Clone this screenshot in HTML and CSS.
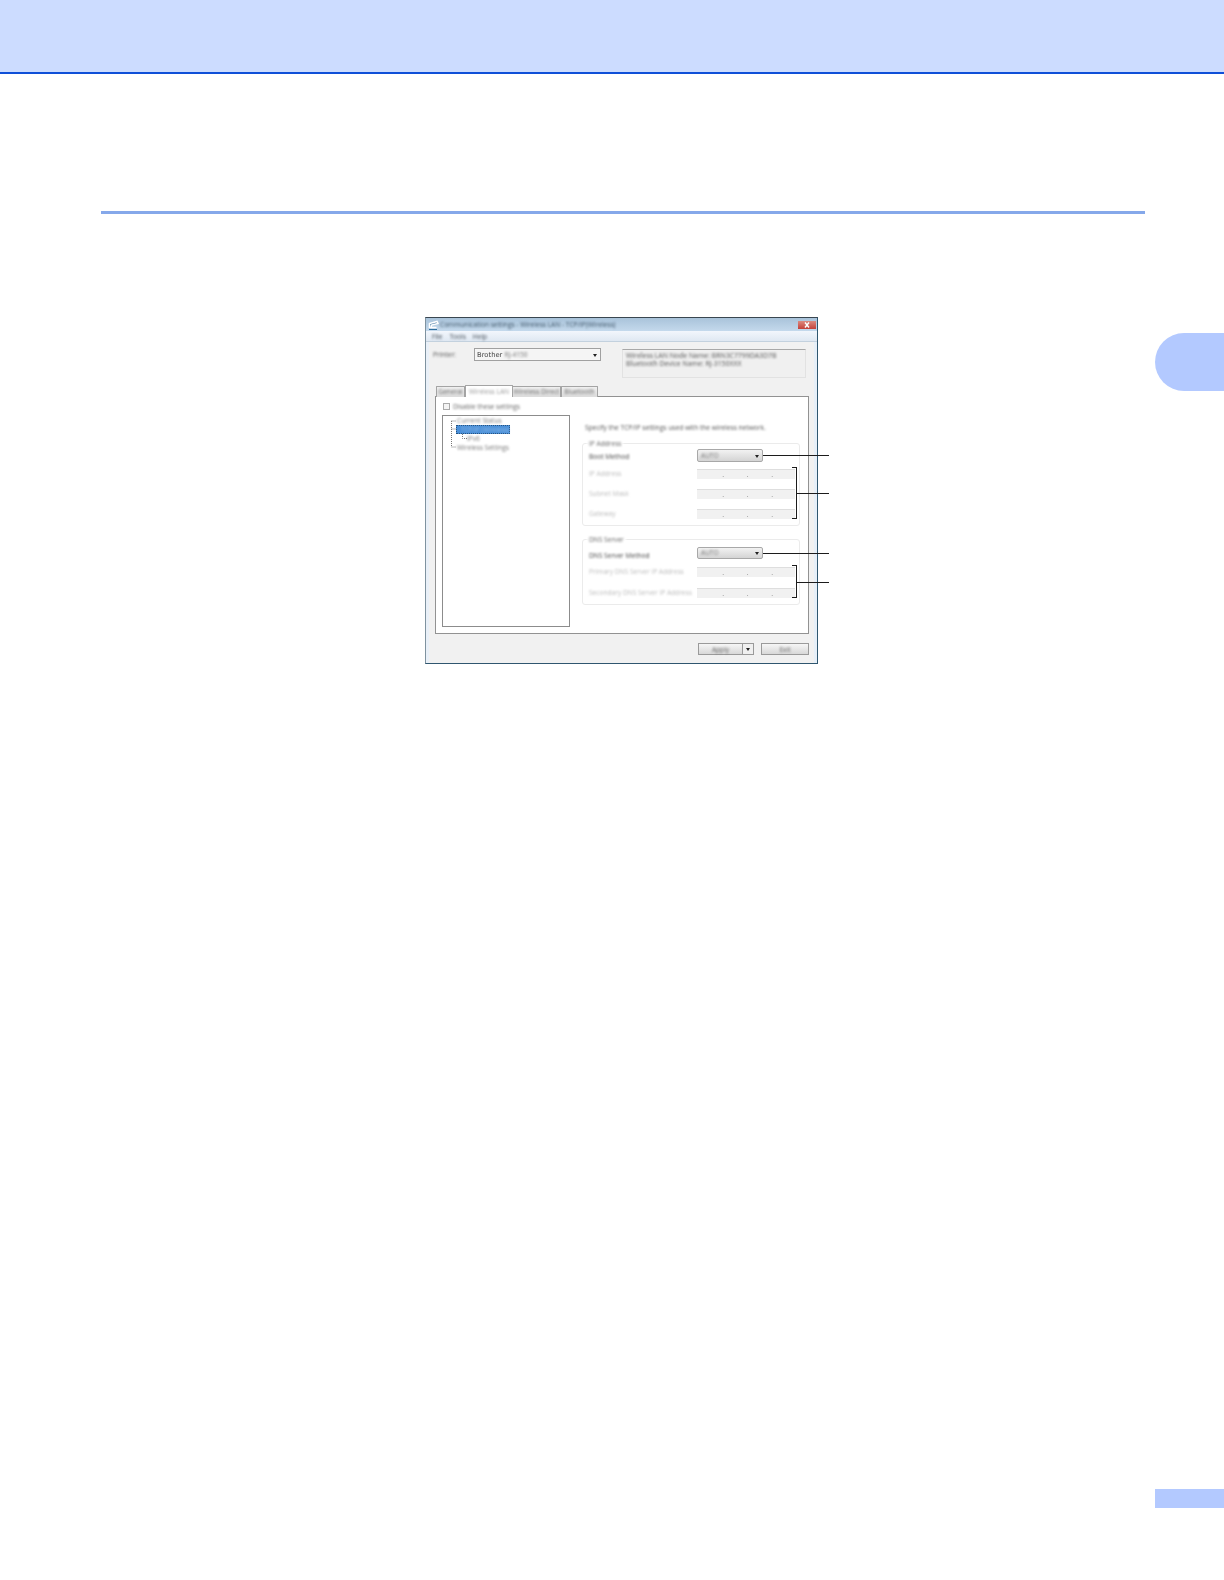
FILE: index.html
```html
<!DOCTYPE html>
<html lang="en">
<head>
<meta charset="utf-8">
<title>Communication settings</title>
<link rel="stylesheet" href="styles.css">
</head>
<body>
<header class="band"></header>
<div class="rule"></div>
<main class="stage">
  <section class="dialog">
    <div class="titlebar">
      <svg class="appicon" viewBox="0 0 11 10" width="11" height="10"><path d="M1.5 8 L1.5 3.5 L9 1.5 L10 3.5 L3.5 5 L3 7.5 L8.5 7.5" fill="#4d7fa6" stroke="#ffffff" stroke-width="1.5"/><path d="M1 9.5 H9" stroke="#2f6f9f" stroke-width="1"/></svg>
      <span class="t title">Communication settings - Wireless LAN - TCP/IP(Wireless)</span>
      <span class="close"><svg viewBox="0 0 18 8" width="18" height="8"><path d="M7 1.5 L11 6.5 M11 1.5 L7 6.5" stroke="#fff" stroke-width="1.4"/></svg></span>
    </div>
    <nav class="menu"><span class="t">File</span><span class="t">Tools</span><span class="t">Help</span></nav>
    <div class="toprow">
      <span class="t devlabel">Printer:</span>
      <div class="combo"><span class="brand">Brother</span><span class="t model">RJ-4150</span><span class="caret"></span></div>
      <div class="info">
        <span class="t">Wireless LAN Node Name: BRN3C7799DA3D7B</span>
        <span class="t">Bluetooth Device Name: RJ-3150XXX</span>
      </div>
    </div>
    <div class="tabs">
      <span class="tab tab-general"><span class="t">General</span></span>
      <span class="tab tab-lan active"><span class="t">Wireless LAN</span></span>
      <span class="tab tab-direct"><span class="t">Wireless Direct</span></span>
      <span class="tab tab-bt"><span class="t">Bluetooth</span></span>
    </div>
    <div class="panel">
      <label class="check"><span class="box"></span><span class="t">Disable these settings</span></label>
      <div class="columns">
        <div class="tree">
          <svg class="treelines" width="30" height="40" viewBox="0 0 30 40"><path d="M8.5 5 V31 M8.5 5 H13 M8.5 13 H13 M8.5 31 H13 M19.5 18 V22.5 H24" fill="none" stroke="#777" stroke-dasharray="1 1"/></svg>
          <div class="node"><span class="t">Current Status</span></div>
          <div class="node selected"><span class="t">TCP/IP (Wireless)</span></div>
          <div class="node sub"><span class="t">IPv6</span></div>
          <div class="node"><span class="t">Wireless Settings</span></div>
        </div>
        <div class="settings">
          <p class="t intro">Specify the TCP/IP settings used with the wireless network.</p>
          <fieldset class="group group-ip">
            <span class="t legend">IP Address</span>
            <span class="t strong">Boot Method</span>
            <div class="select"><span class="t">AUTO</span><span class="caret"></span></div>
            <span class="t muted">IP Address</span>
            <div class="field"><i>.</i><i>.</i><i>.</i><i></i></div>
            <span class="t muted">Subnet Mask</span>
            <div class="field"><i>.</i><i>.</i><i>.</i><i></i></div>
            <span class="t muted">Gateway</span>
            <div class="field"><i>.</i><i>.</i><i>.</i><i></i></div>
            <span class="lead lead-select"></span>
            <span class="bracket"></span>
            <span class="lead lead-bracket"></span>
          </fieldset>
          <fieldset class="group group-dns">
            <span class="t legend">DNS Server</span>
            <span class="t strong">DNS Server Method</span>
            <div class="select"><span class="t">AUTO</span><span class="caret"></span></div>
            <span class="t muted">Primary DNS Server IP Address</span>
            <div class="field"><i>.</i><i>.</i><i>.</i><i></i></div>
            <span class="t muted">Secondary DNS Server IP Address</span>
            <div class="field"><i>.</i><i>.</i><i>.</i><i></i></div>
            <span class="lead lead-select"></span>
            <span class="bracket"></span>
            <span class="lead lead-bracket"></span>
          </fieldset>
        </div>
      </div>
    </div>
    <div class="actions">
      <div class="split"><span class="btn-main"><span class="t">Apply</span></span><span class="btn-drop"><span class="caret"></span></span></div>
      <div class="exit"><span class="t">Exit</span></div>
    </div>
  </section>
  <aside class="sidetab"></aside>
</main>
<footer class="foot"><div class="pagetab"></div></footer>
</body>
</html>
```

FILE: styles.css
```css
* { box-sizing: border-box; }
html, body { margin: 0; padding: 0; background: #fff; }
body { height: 1580px; overflow: hidden; font-family: "Open Sans", "Liberation Sans", sans-serif; font-size: 6.6px; color: #444; }

.band { height: 74px; background: #ccdcff; border-bottom: 2px solid #0f4fd8; }
.rule { height: 3px; margin: 137px 79px 0 101px; background: #85a8ea; }
.stage { display: flex; align-items: flex-start; margin-top: 103px; padding-left: 425px; }
.sidetab { width: 69px; height: 58px; margin: 16px 0 0 auto; background: #b3c9ff; border-radius: 29px 0 0 29px; }
.foot { display: flex; justify-content: flex-end; margin-top: 825px; }
.pagetab { width: 69px; height: 19px; background: #b3c9ff; }

.t { display: inline-block; filter: blur(0.8px); white-space: nowrap; }

.dialog { width: 393px; height: 347px; border: 1px solid #7f929f; border-top-color: #3a4650; border-right-color: #2f566f; border-bottom-color: #2f566f; background: #f1f1f1; box-shadow: inset -3px 0 0 #e6eff8, inset 3px 0 0 #e9f0f8; display: flex; flex-direction: column; }
.titlebar { height: 13px; display: flex; align-items: center; padding-left: 2px; background: linear-gradient(#a9c3da, #c4d9ec); color: #3f5567; flex: none; }
.appicon { flex: none; }
.title { margin-left: 1px; font-size: 6.6px; }
.close { margin-left: auto; margin-right: 1px; width: 18px; height: 8px; display: flex; background: linear-gradient(#dc8a80, #c4413a); }
.menu { height: 11px; flex: none; display: flex; gap: 7px; align-items: center; padding-left: 6px; background: linear-gradient(#f2f6fc, #dfe8f2); border-bottom: 1px solid #c3d1de; color: #47505a; }

.toprow { display: flex; align-items: flex-start; height: 30px; margin-top: 6px; padding-left: 7px; flex: none; }
.devlabel { width: 41px; line-height: 13px; color: #555; }
.combo { position: relative; width: 127px; height: 13px; display: flex; align-items: center; padding-left: 2px; background: #f5f5f5; border: 1px solid #a0a0a0; box-shadow: inset 0 0 1px #fff; }
.brand { font-family: "DejaVu Sans", sans-serif; font-size: 6.8px; color: #444; filter: blur(0.25px); }
.model { margin-left: 2px; font-size: 6.6px; color: #777; }
.caret { position: absolute; right: 3px; top: 50%; margin-top: -1px; width: 0; height: 0; border: 2.4px solid transparent; border-bottom: 0; border-top: 3px solid #222; }
.info { width: 184px; height: 29px; margin: 1px 0 0 21px; padding: 2px 0 0 3px; display: flex; flex-direction: column; line-height: 7.5px; background: #f0f0f0; border: 1px solid #e2e2e2; border-top-color: #a8a8a8; color: #555; }
.info .t { font-size: 6.9px; }

.tabs { display: flex; height: 11px; margin-top: 7px; padding-left: 10px; flex: none; position: relative; z-index: 1; }
.tab { height: 11px; margin-top: 1px; display: flex; align-items: center; justify-content: center; padding-bottom: 1px; background: linear-gradient(#f0f0f0, #dcdcdc); border: 1px solid #a4a4a4; border-bottom: 0; color: #666; border-radius: 1px 1px 0 0; }
.tab-general { width: 29px; }
.tab-lan { width: 48px; }
.tab-direct { width: 49px; margin-left: -1px; }
.tab-bt { width: 37px; }
.tab.active { height: 12px; margin-top: 0; background: #fff; color: #999; position: relative; z-index: 2; }

.panel { width: 374px; height: 238px; margin-left: 9px; padding: 5px 7px 0; background: #fff; border: 1px solid #929292; flex: none; }
.check { display: flex; align-items: center; gap: 3px; height: 9px; color: #666; }
.box { width: 7px; height: 7px; background: #f4f4f4; border: 1px solid #aaa; flex: none; filter: blur(0.3px); }
.columns { display: flex; margin: 4px 0 0 -1px; }
.tree { position: relative; width: 128px; height: 212px; padding: 0 0 0 14px; border: 1px solid #8c8c8c; flex: none; }
.treelines { position: absolute; left: 0; top: 0; }
.node { height: 9px; line-height: 9px; color: #777; }
.selected { width: 54px; margin-left: -1px; padding-left: 5px; font-size: 6.2px; background: #4a8fd8; color: #8ebbe8; outline: 1px dotted #24527f; outline-offset: -1px; }
.sub { padding-left: 10px; }

.settings { width: 218px; margin-left: 12px; padding-top: 8px; flex: none; }
.intro { margin: 0 0 0 3px; height: 10px; line-height: 10px; color: #555; font-size: 6.65px; }
.group { position: relative; margin: 0; padding: 5px 0 0 6px; width: 218px; border: 1px solid #ebebeb; border-radius: 3px; display: grid; grid-template-columns: 108px 98px; grid-auto-rows: 20px; align-items: start; min-width: 0; }
.group-ip { height: 83px; margin-top: 10px; }
.group-dns { height: 66px; margin-top: 13px; padding-top: 7px; grid-template-rows: 20px 21px 10px; }
.legend { position: absolute; left: 4px; top: -4px; padding: 0 2px; background: #fff; line-height: 8px; color: #666; }
.strong { color: #444; line-height: 15px; }
.muted { color: #bbb; line-height: 10px; }
.select { position: relative; width: 66px; height: 13px; padding-left: 3px; line-height: 11px; color: #777; background: linear-gradient(#f2f2f2, #d4d4d4); border: 1px solid #a8a8a8; border-radius: 2px; }
.group-dns .select { height: 12px; line-height: 10px; }
.group-dns .strong { line-height: 17px; }
.field { width: 98px; height: 10px; display: grid; grid-template-columns: 27px 24.5px 24.5px 22px; background: #f1f1f1; border-top: 1px solid #dedede; filter: blur(0.2px); }
.field i { font-style: normal; text-align: right; font-size: 7px; line-height: 9px; color: #888; filter: blur(0.3px); }

.lead { position: absolute; height: 1px; background: #1c1c1c; }
.lead-select { left: 180px; top: 11px; width: 66px; }
.lead-bracket { left: 214px; top: 49px; width: 32px; }
.bracket { position: absolute; left: 209px; top: 23px; width: 5px; height: 52px; border: 1px solid #1c1c1c; border-left: 0; }
.group-dns .lead-select { top: 13px; }
.group-dns .bracket { top: 25px; height: 33px; }
.group-dns .lead-bracket { top: 42px; }

.actions { display: flex; justify-content: flex-end; gap: 7px; margin-top: 9px; padding-right: 8px; flex: none; }
.split { display: flex; width: 56px; height: 12px; background: linear-gradient(#f6f6f6, #d8d8d8); border: 1px solid #9a9a9a; }
.btn-main { flex: 1; display: flex; justify-content: center; align-items: center; color: #666; }
.btn-drop { position: relative; width: 11px; border-left: 1px solid #9a9a9a; background: #f0f0f0; }
.exit { width: 48px; height: 12px; display: flex; justify-content: center; align-items: center; color: #666; background: linear-gradient(#f6f6f6, #d8d8d8); border: 1px solid #9a9a9a; }
```
